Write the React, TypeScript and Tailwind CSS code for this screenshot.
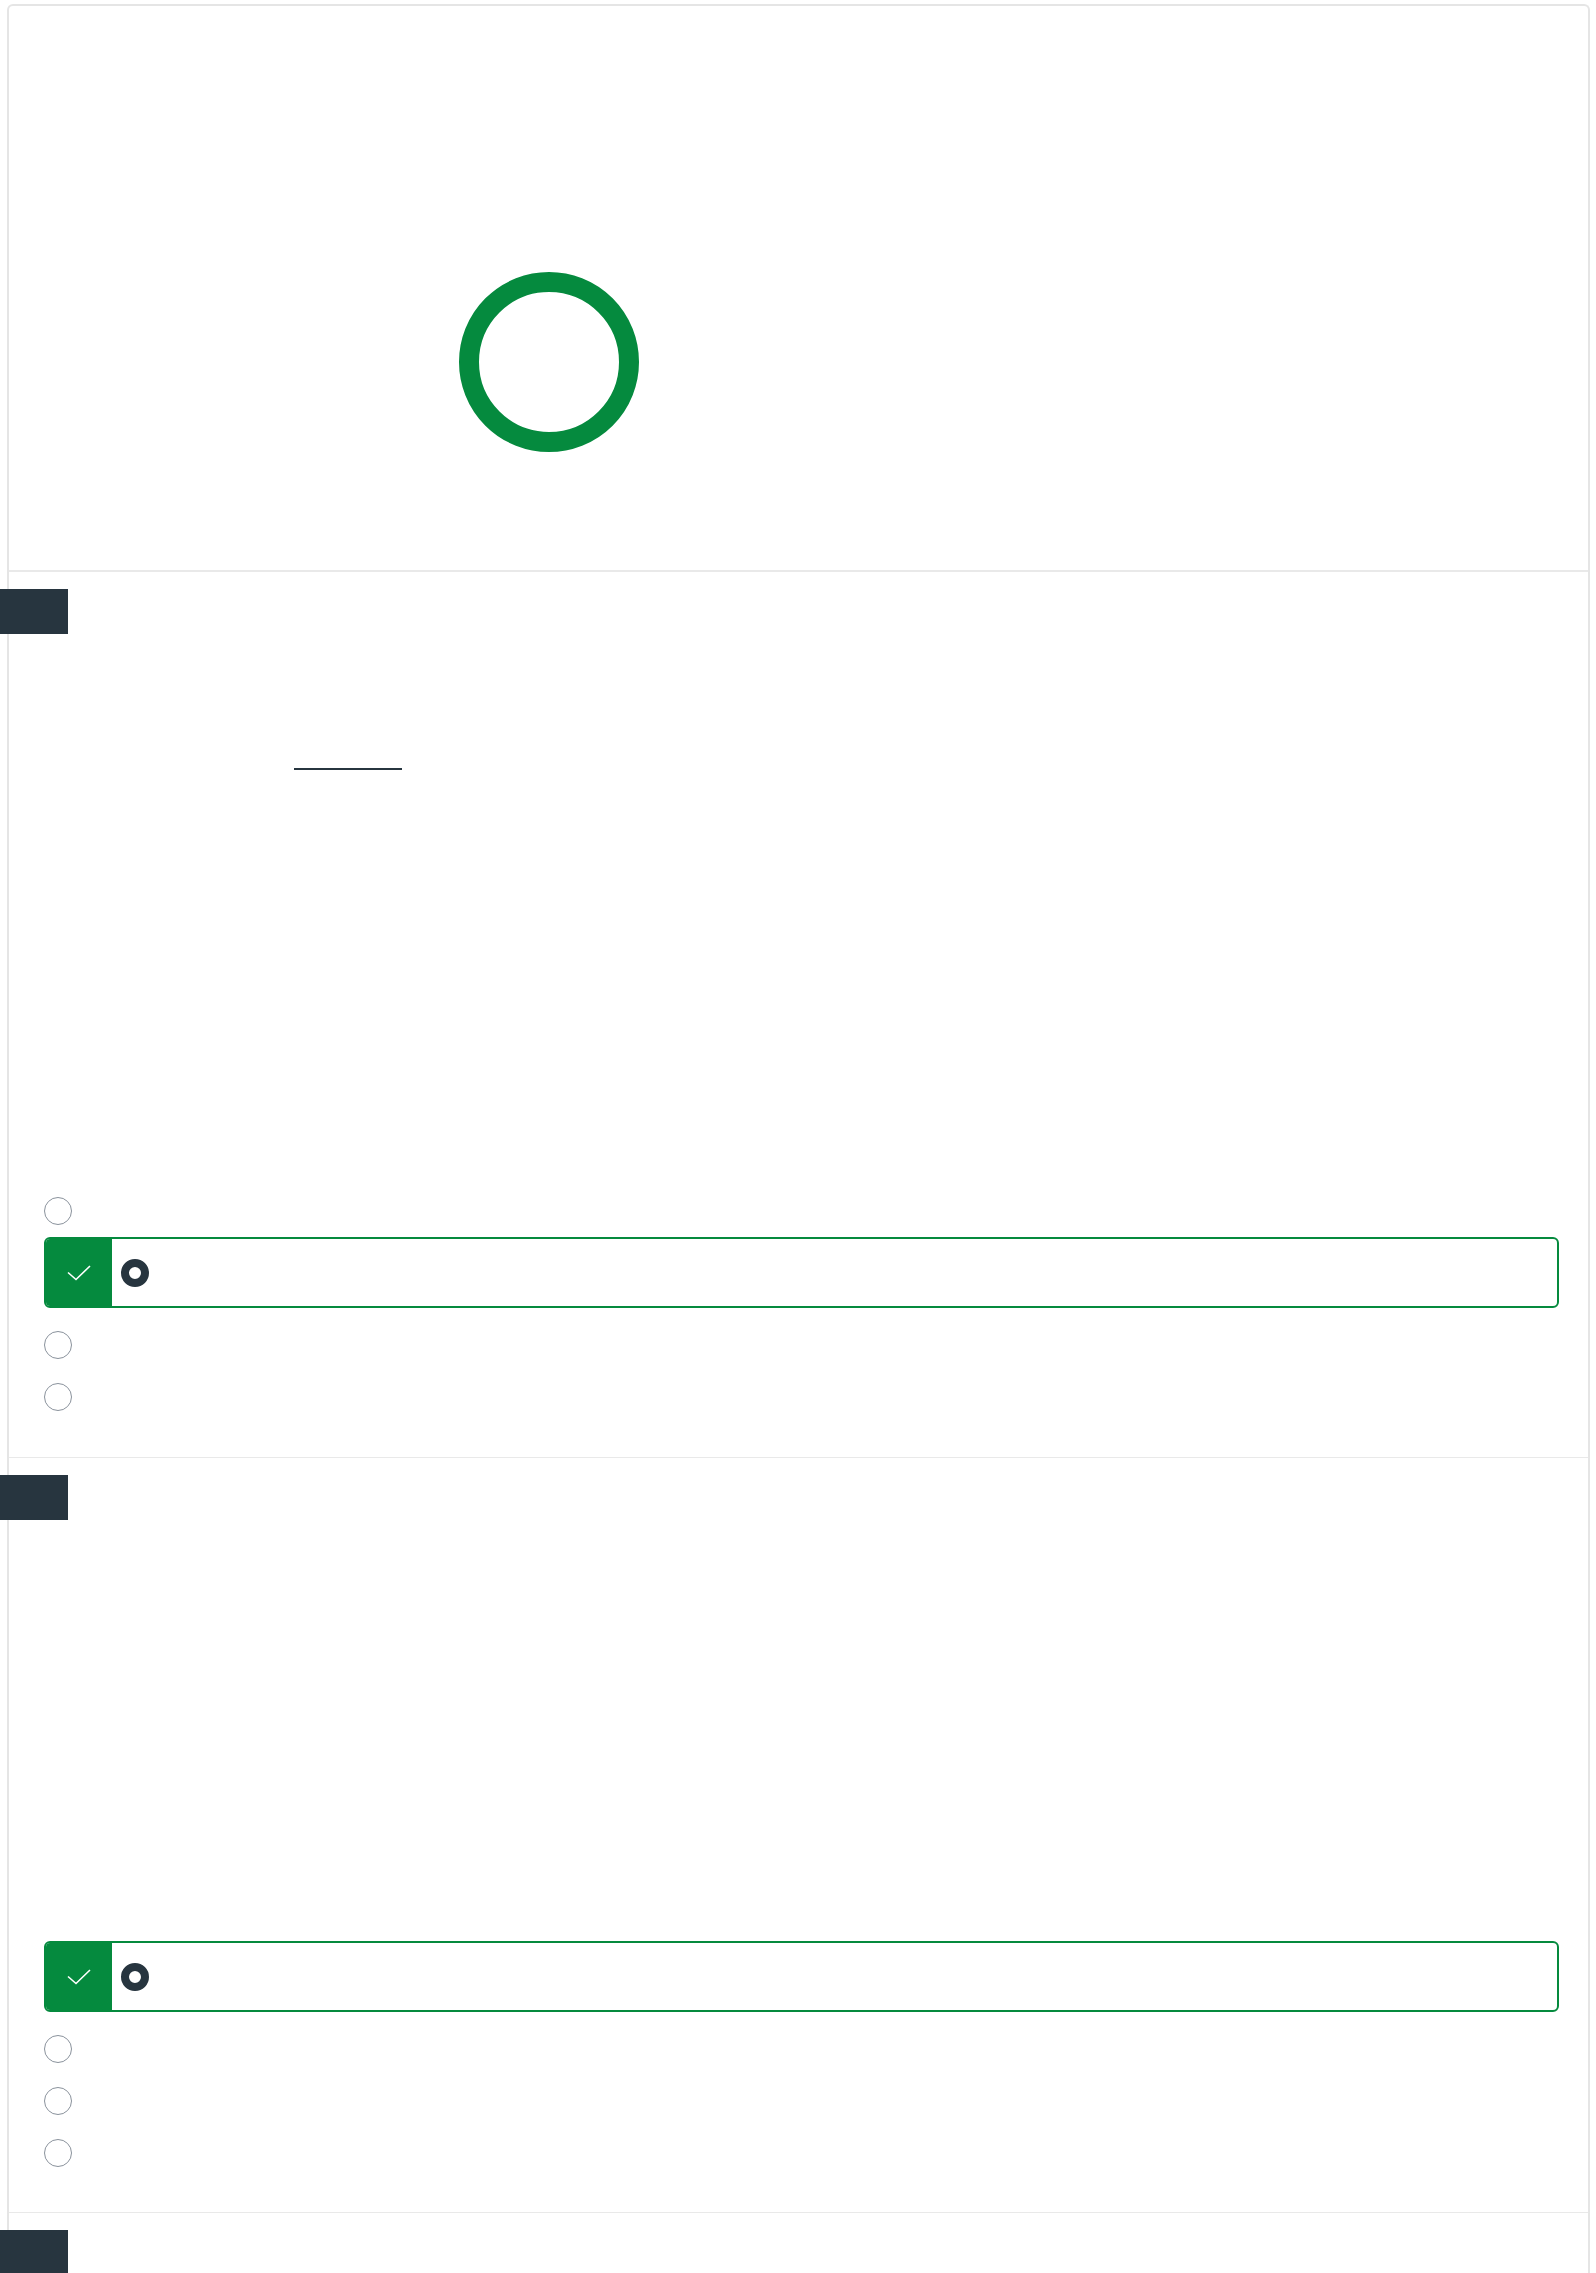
import React from "react";

function Badge() {
  return <div className="-ml-[9px] h-[45px] w-[68px] bg-[#27353f]" />;
}

function Radio() {
  return (
    <div className="flex h-[52px] items-center">
      <div className="h-[28px] w-[28px] rounded-full border-[1.5px] border-[#8a929c] bg-white" />
    </div>
  );
}

function CorrectOption() {
  return (
    <div className="flex h-[71px] overflow-hidden rounded-[6px] border-2 border-[#058a3e]">
      <div className="flex w-[66px] items-center justify-center bg-[#058a3e]">
        <svg width="24" height="16" viewBox="0 0 24 16" fill="none">
          <polyline points="1,7.5 9,14.5 23,1" stroke="white" strokeWidth="1.6" />
        </svg>
      </div>
      <div className="flex items-center pl-[9px]">
        <div className="h-[28px] w-[28px] rounded-full border-[8px] border-[#27353f] bg-white" />
      </div>
    </div>
  );
}

export default function App() {
  return (
    <div className="min-h-[2273px] bg-white" style={{ fontFamily: '"Noto Sans", "Liberation Sans", sans-serif' }}>
      <div className="ml-[7px] mt-[4px] w-[1583px] rounded-t-[6px] border-2 border-b-0 border-[#e5e5e5] bg-white">
        {/* summary */}
        <div className="h-[566px] border-b-2 border-[#e9e9e9] pl-[450px] pt-[266px]">
          <div className="h-[180px] w-[180px] rounded-full border-[20px] border-[#058a3e]" />
        </div>

        {/* question 1 */}
        <div className="border-b border-[#e9e9e9] pt-[17px] pb-[34px]">
          <Badge />
          <div className="relative h-[551px]">
            <div className="absolute left-[285px] top-[134px] h-[2px] w-[108px] bg-[#27353f]" />
          </div>
          <div className="pl-[35px] pr-[29px]">
            <Radio />
            <CorrectOption />
            <div className="mt-[11px]">
              <Radio />
              <Radio />
            </div>
          </div>
        </div>

        {/* question 2 */}
        <div className="border-b border-[#e9e9e9] pt-[17px] pb-[33px]">
          <Badge />
          <div className="h-[421px]" />
          <div className="pl-[35px] pr-[29px]">
            <CorrectOption />
            <div className="mt-[11px]">
              <Radio />
              <Radio />
              <Radio />
            </div>
          </div>
        </div>

        {/* question 3 */}
        <div className="pt-[17px]">
          <Badge />
          <div className="h-[200px]" />
        </div>
      </div>
    </div>
  );
}
